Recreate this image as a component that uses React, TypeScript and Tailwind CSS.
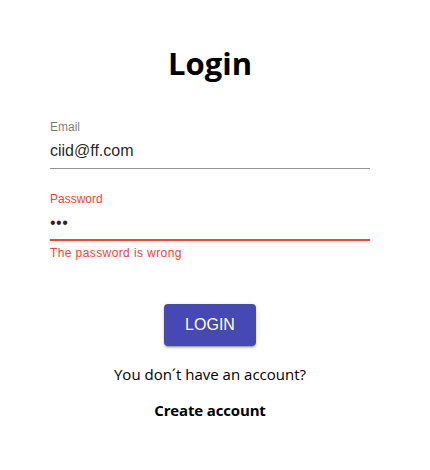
import React from "react";

export default function App() {
  const seg = { fontFamily: '"Open Sans", "Noto Sans", sans-serif' };
  const ari = { fontFamily: '"Liberation Sans", Arial, sans-serif' };
  return (
    <div className="w-[420px] h-[470px] bg-white flex flex-col items-center">
      <h1 style={seg} className="pt-[41px] text-[31px] leading-[44px] font-bold text-black">
        Login
      </h1>
      <div style={ari} className="w-[320px] flex flex-col mt-[34px]">
        <label className="text-[12px] leading-[16px] text-[rgba(0,0,0,0.54)]">Email</label>
        <div className="mt-[6px] text-[16px] leading-[19px] text-[rgba(0,0,0,0.87)]">ciid@ff.com</div>
        <div className="mt-[8px] h-px bg-[#949494]" />
        <label className="mt-[22px] text-[12px] leading-[16px] text-[#f44336]">Password</label>
        <div className="mt-[6px] text-[16px] leading-[19px] text-[rgba(0,0,0,0.87)] tracking-[0.5px]">•••</div>
        <div className="mt-[7px] h-[2px] bg-[#f44336]" />
        <p className="mt-[4px] text-[12px] leading-[16px] tracking-[0.4px] text-[#f44336]">The password is wrong</p>
      </div>
      <button
        style={ari}
        className="mt-[43px] w-[92px] h-[42px] rounded-[4px] bg-[#4649b4] text-white text-[16px] leading-none uppercase shadow-[0_3px_1px_-2px_rgba(0,0,0,0.2),0_2px_2px_0_rgba(0,0,0,0.14),0_1px_5px_0_rgba(0,0,0,0.12)]"
      >
        Login
      </button>
      <p style={seg} className="mt-[17px] text-[15px] leading-[22px] text-black">
        You don´t have an account?
      </p>
      <p style={seg} className="mt-[14px] text-[15px] leading-[22px] tracking-[-0.15px] font-bold text-black">
        Create account
      </p>
    </div>
  );
}
